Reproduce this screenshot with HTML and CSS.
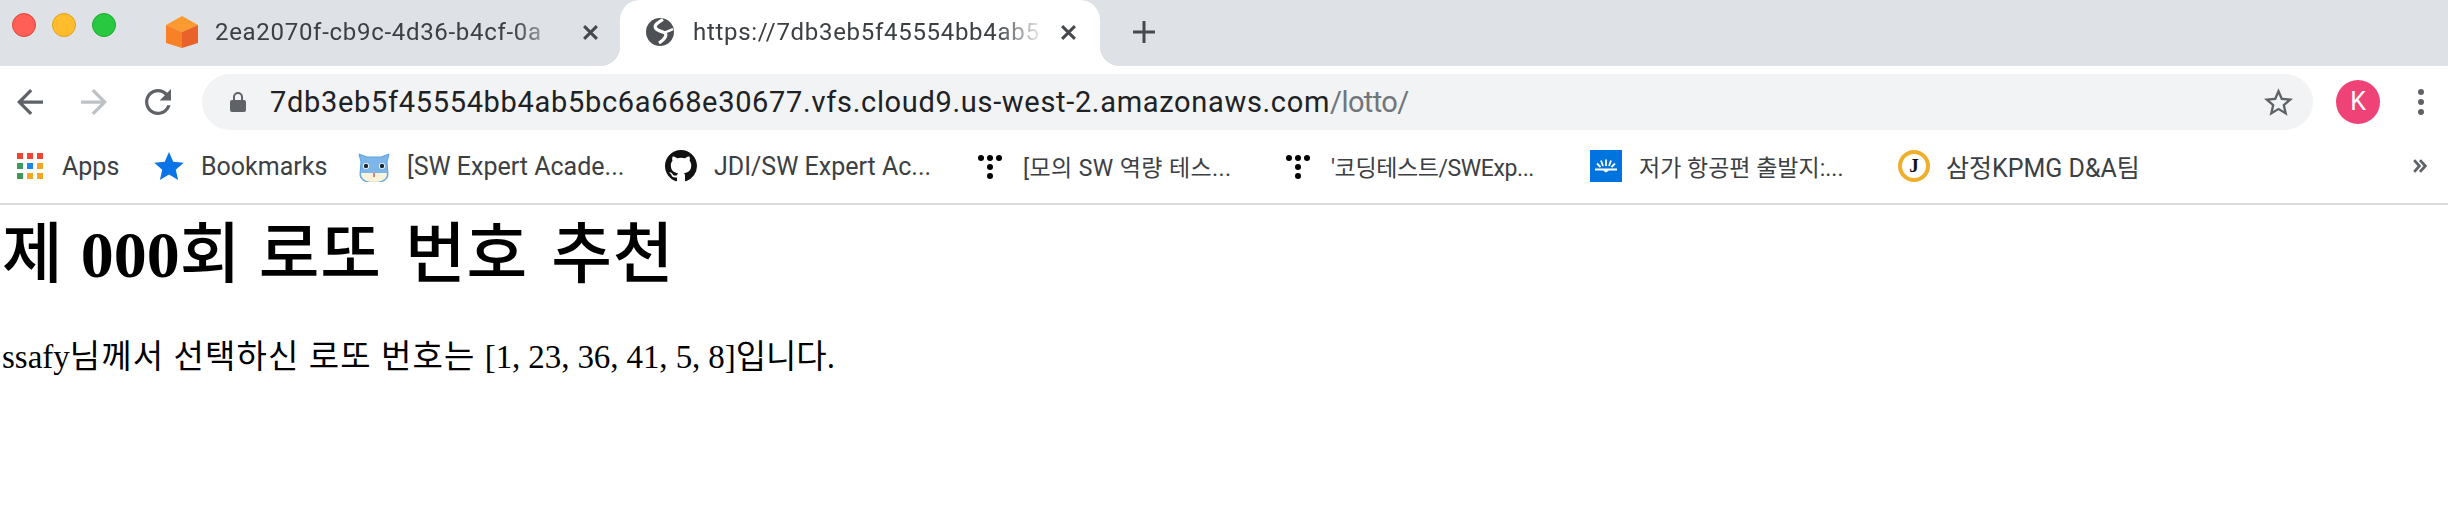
FILE: index.html
```html
<!DOCTYPE html>
<html lang="ko">
<head>
    <meta charset="UTF-8">
    <meta name="viewport" content="width=device-width, initial-scale=1.0">
    <title>로또 번호 추천</title>
    <link rel="stylesheet" href="styles.css">
</head>
<body>
    <header class="browser">
        <div class="tabstrip">
            <div class="lights">
                <span class="light red"></span>
                <span class="light yellow"></span>
                <span class="light green"></span>
            </div>
            <div class="tab">
                <svg class="favicon cube" viewBox="0 0 32 32">
                    <path fill="#fb9a2f" d="M16 0 32 9 16 16 0 9z"/>
                    <path fill="#f88127" d="M0 9 16 16V32L0 27z"/>
                    <path fill="#e8622a" d="M32 9 16 16V32L32 27z"/>
                </svg>
                <span class="tab-title">2ea2070f-cb9c-4d36-b4cf-0a</span>
                <svg class="tab-close" viewBox="0 0 16 16"><path d="M2 2 14 14M14 2 2 14"/></svg>
            </div>
            <div class="tab active">
                <svg class="favicon globe" viewBox="0 0 28 28">
                    <circle cx="14" cy="14" r="14" fill="#4d5156"/>
                    <path fill="none" stroke="#fff" stroke-width="3.200" d="M17 1.500C12 4.500 8 7 9.500 10 11 13 15 13 18 14.500 21.500 16 20 20.500 13 25"/>
                    <path fill="none" stroke="#fff" stroke-width="2.400" d="M18 14.500C21 13.500 24 13 27 11"/>
                </svg>
                <span class="tab-title">https://7db3eb5f45554bb4ab5</span>
                <svg class="tab-close" viewBox="0 0 16 16"><path d="M2 2 14 14M14 2 2 14"/></svg>
            </div>
            <svg class="new-tab" viewBox="0 0 24 24"><path d="M12 1V23M1 12H23"/></svg>
        </div>

        <div class="toolbar">
            <svg class="nav-icon" viewBox="4 4 16 16"><path d="M20 11H7.830l5.590-5.590L12 4l-8 8 8 8 1.410-1.410L7.830 13H20v-2z"/></svg>
            <svg class="nav-icon disabled" viewBox="4 4 16 16"><path d="M4 11h12.170l-5.590-5.590L12 4l8 8-8 8-1.410-1.410L16.170 13H4v-2z"/></svg>
            <svg class="nav-icon reload" viewBox="4 4 16 16"><path d="M17.650 6.350C16.200 4.900 14.210 4 12 4c-4.420 0-7.990 3.580-7.990 8s3.570 8 7.990 8c3.730 0 6.840-2.550 7.730-6h-2.080c-.820 2.330-3.040 4-5.650 4-3.310 0-6-2.690-6-6s2.690-6 6-6c1.660 0 3.140.690 4.220 1.780L13 11h7V4l-2.350 2.350z"/></svg>
            <div class="omnibox">
                <svg class="lock" viewBox="0 0 16 20">
                    <path d="M0 10a2 2 0 0 1 2-2h1V5a5 5 0 0 1 10 0v3h1a2 2 0 0 1 2 2v8a2 2 0 0 1-2 2H2a2 2 0 0 1-2-2zM5 8h6V5a3 3 0 0 0-6 0z"/>
                </svg>
                <span class="url">7db3eb5f45554bb4ab5bc6a668e30677.vfs.cloud9.us-west-2.amazonaws.com<span class="url-path">/lotto/</span></span>
                <svg class="bookmark-star" viewBox="2 2 20 19"><path d="M22 9.240l-7.190-.620L12 2 9.190 8.630 2 9.240l5.460 4.730L5.820 21 12 17.270 18.180 21l-1.630-7.030L22 9.240zM12 15.400l-3.760 2.270 1-4.280-3.320-2.880 4.380-.380L12 6.100l1.710 4.040 4.380.380-3.320 2.880 1 4.280L12 15.400z"/></svg>
            </div>
            <div class="avatar">K</div>
            <div class="menu"><span></span><span></span><span></span></div>
        </div>

        <div class="bookmarks">
            <a class="bm">
                <svg class="bm-icon" viewBox="0 0 26 26">
                    <rect x="0" y="0" width="6" height="6" fill="#f44336"/><rect x="10" y="0" width="6" height="6" fill="#f44336"/><rect x="20" y="0" width="6" height="6" fill="#f44336"/>
                    <rect x="0" y="10" width="6" height="6" fill="#3b9a5c"/><rect x="10" y="10" width="6" height="6" fill="#1a88e6"/><rect x="20" y="10" width="6" height="6" fill="#f5a623"/>
                    <rect x="0" y="20" width="6" height="6" fill="#3b9a5c"/><rect x="10" y="20" width="6" height="6" fill="#f5a623"/><rect x="20" y="20" width="6" height="6" fill="#f5a623"/>
                </svg>
                Apps
            </a>
            <a class="bm">
                <svg class="bm-icon star" viewBox="2 2 20 19"><path fill="#0a74e6" d="M12 2l2.900 6.600 7.100.7-5.400 4.700 1.600 7L12 17.300 5.800 21l1.600-7L2 9.300l7.100-.7z"/></svg>
                Bookmarks
            </a>
            <a class="bm">
                <svg class="bm-icon wide" viewBox="0 -3 32 32">
                    <path fill="#7db7ea" stroke="#5c9fdc" d="M1 1 9 4h14l8-3-2 8 1 12c0 6-5 8.500-14 8.500S2 27 2 21L3 9z"/>
                    <path fill="#fdf3d8" d="M3 20h26c0 6-5 9-13 9S3 26 3 20z"/>
                    <circle cx="8" cy="13" r="3" fill="#fff"/><circle cx="24" cy="13" r="3" fill="#fff"/>
                    <circle cx="8" cy="13" r="2.200" fill="#1d2733"/><circle cx="24" cy="13" r="2.200" fill="#1d2733"/>
                    <rect x="15.400" y="20" width="1.200" height="4" fill="#e0352b"/>
                </svg>
                [SW Expert Acade...
            </a>
            <a class="bm">
                <svg class="bm-icon wide" viewBox="0 0 16 16"><path fill="#111" d="M8 0C3.580 0 0 3.580 0 8c0 3.540 2.290 6.530 5.470 7.590.4.070.55-.17.55-.38 0-.19-.01-.82-.01-1.490-2.010.37-2.530-.49-2.690-.94-.09-.23-.48-.94-.82-1.130-.28-.15-.68-.52-.01-.53.630-.01 1.080.58 1.230.82.720 1.210 1.870.87 2.330.66.070-.52.280-.87.510-1.070-1.780-.2-3.640-.89-3.640-3.950 0-.87.310-1.590.820-2.150-.08-.2-.36-1.020.08-2.120 0 0 .67-.21 2.200.82.640-.18 1.320-.27 2-.27s1.360.09 2 .27c1.530-1.040 2.200-.82 2.200-.82.440 1.100.16 1.920.08 2.120.51.560.82 1.270.82 2.150 0 3.070-1.870 3.750-3.650 3.950.29.250.54.730.54 1.480 0 1.070-.01 1.930-.01 2.200 0 .21.150.46.550.38A8.010 8.010 0 0 0 16 8c0-4.420-3.580-8-8-8z"/></svg>
                JDI/SW Expert Ac...
            </a>
            <a class="bm ko-wide">
                <svg class="bm-icon" viewBox="0 0 26 26"><circle cx="3" cy="5" r="3"/><circle cx="12" cy="5" r="3"/><circle cx="21" cy="5" r="3"/><circle cx="12" cy="14" r="3"/><circle cx="12" cy="23" r="3"/></svg>
                [모의 SW 역량 테스...
            </a>
            <a class="bm ko-tight">
                <svg class="bm-icon" viewBox="0 0 26 26"><circle cx="3" cy="5" r="3"/><circle cx="12" cy="5" r="3"/><circle cx="21" cy="5" r="3"/><circle cx="12" cy="14" r="3"/><circle cx="12" cy="23" r="3"/></svg>
                '코딩테스트/SWExp...
            </a>
            <a class="bm ko">
                <svg class="bm-icon wide" viewBox="0 0 32 32">
                    <rect width="32" height="32" fill="#0074de"/>
                    <path stroke="#fff" stroke-width="1.800" fill="none" d="M16 9.500V16M11 10.500 13 16M21 10.500 19 16M7 13.500 10.500 17M25 13.500 21.500 17"/>
                    <path fill="#fff" d="M5 18.500H27V20.500H19L16 22.500 13 20.500H5z"/>
                </svg>
                저가 항공편 출발지:...
            </a>
            <a class="bm">
                <span class="kpmg-icon">J</span>
                삼정KPMG D&amp;A팀
            </a>
            <svg class="more" viewBox="0 0 12 12"><path d="M1 1 5.500 6 1 11M6 1 10.500 6 6 11"/></svg>
        </div>
    </header>

    <main class="page">
        <h1 class="title">제 <b>000</b>회 <span class="title-words">로또 번호 추천</span></h1>
        <p class="result">ssafy<span class="result-ko">님께서 선택하신 로또 번호는 </span><span class="result-nums">[1, 23, 36, 41, 5, 8]</span>입니다.</p>
    </main>
</body>
</html>
```

FILE: styles.css
```css
html, body {
    margin: 0;
    padding: 0;
    background-color: #fff;
}
body {
    height: 530px;
    overflow: hidden;
}

/* browser chrome */
.browser {
    font-family: Roboto, "Noto Sans CJK KR", sans-serif;
    color: #3c4043;
    border-bottom: 2px solid #dadce0;
}
.tabstrip {
    display: flex;
    align-items: center;
    height: 66px;
    background-color: #dee1e6;
}
.lights {
    display: flex;
    gap: 16px;
    width: 166px;
    padding-left: 12px;
    box-sizing: border-box;
    align-self: flex-start;
    margin-top: 13px;
}
.light {
    width: 24px;
    height: 24px;
    border-radius: 50%;
    box-sizing: border-box;
}
.red {
    background-color: #ff5f57;
    border: 1px solid #e2463f;
}
.yellow {
    background-color: #ffbd2e;
    border: 1px solid #e1a116;
}
.green {
    background-color: #28c840;
    border: 1px solid #1dad2b;
}
.tab {
    display: flex;
    align-items: center;
    width: 454px;
    height: 66px;
    padding-bottom: 2px;
    box-sizing: border-box;
    font-size: 24px;
}
.tab.active {
    position: relative;
    width: 480px;
    padding-left: 26px;
    background-color: #fff;
    border-radius: 20px 20px 0 0;
}
.tab.active::before,
.tab.active::after {
    content: "";
    position: absolute;
    bottom: 0;
    width: 20px;
    height: 20px;
}
.tab.active::before {
    left: -20px;
    background: radial-gradient(circle at 0 0, #dee1e6 20px, #fff 20.500px);
}
.tab.active::after {
    right: -20px;
    background: radial-gradient(circle at 100% 0, #dee1e6 20px, #fff 20.500px);
}
.favicon {
    flex: none;
}
.cube {
    width: 32px;
    height: 32px;
    margin-right: 17px;
}
.globe {
    width: 28px;
    height: 28px;
    margin-right: 19px;
}
.tab-title {
    width: 348px;
    white-space: nowrap;
    overflow: hidden;
    letter-spacing: 0.7px;
    -webkit-mask-image: linear-gradient(to right, #000 86%, transparent 100%);
    mask-image: linear-gradient(to right, #000 86%, transparent 100%);
}
.active .tab-title {
    width: 352px;
}
.tab-close {
    flex: none;
    width: 17px;
    height: 17px;
    margin-left: 19px;
    fill: none;
    stroke: #45484c;
    stroke-width: 2.800;
}
.active .tab-close {
    margin-left: 15px;
}
.new-tab {
    width: 24px;
    height: 24px;
    margin-left: 32px;
    margin-bottom: 2px;
    fill: none;
    stroke: #45484c;
    stroke-width: 3;
}

.toolbar {
    display: flex;
    align-items: center;
    height: 72px;
    background-color: #fff;
}
.nav-icon {
    flex: none;
    width: 26px;
    height: 26px;
    margin-left: 17px;
    margin-right: 21px;
    fill: #5f6368;
}
.nav-icon.disabled {
    fill: #bdc1c6;
}
.nav-icon.reload {
    margin-right: 31px;
}
.omnibox {
    flex: none;
    display: flex;
    align-items: center;
    width: 2111px;
    height: 56px;
    padding: 0 20px 0 28px;
    box-sizing: border-box;
    background-color: #f1f3f4;
    border-radius: 28px;
}
.lock {
    flex: none;
    width: 16px;
    height: 20px;
    fill: #5f6368;
}
.url {
    flex: 1;
    margin-left: 24px;
    font-size: 29px;
    letter-spacing: 0.68px;
    color: #202124;
    white-space: nowrap;
}
.url-path {
    color: #70757a;
    letter-spacing: -0.6px;
}
.bookmark-star {
    flex: none;
    width: 29px;
    height: 28px;
    fill: #5f6368;
}
.avatar {
    flex: none;
    width: 44px;
    height: 44px;
    margin-left: 23px;
    border-radius: 50%;
    background-color: #ef4377;
    color: #fff;
    font-size: 25px;
    line-height: 44px;
    text-align: center;
}
.menu {
    display: flex;
    flex-direction: column;
    gap: 4px;
    margin-left: 38px;
}
.menu span {
    width: 6px;
    height: 6px;
    border-radius: 50%;
    background-color: #5f6368;
}

.bookmarks {
    display: grid;
    grid-template-columns: 137px 204px 307px 313px 308px 304px 308px 1fr auto;
    align-items: center;
    height: 56px;
    padding: 0 21px 9px 17px;
    font-size: 25px;
    background-color: #fff;
}
.bm {
    display: flex;
    align-items: center;
    white-space: nowrap;
}
.ko {
    font-size: 23px;
}
.ko-wide {
    font-size: 23px;
    letter-spacing: 0.4px;
}
.ko-tight {
    font-size: 23px;
    letter-spacing: -0.4px;
}
.bm-icon {
    flex: none;
    width: 26px;
    height: 26px;
    margin-right: 19px;
}
.bm-icon.star {
    width: 30px;
    height: 28px;
    margin-right: 17px;
}
.bm-icon.wide {
    width: 32px;
    height: 32px;
    margin-right: 17px;
}
.kpmg-icon {
    flex: none;
    box-sizing: border-box;
    width: 32px;
    height: 32px;
    margin-right: 16px;
    border: 4px solid #efae2c;
    border-radius: 50%;
    color: #111;
    font-family: "Liberation Serif", serif;
    font-size: 19px;
    font-weight: bold;
    line-height: 24px;
    text-align: center;
}
.more {
    width: 14px;
    height: 14px;
    fill: none;
    stroke: #5f6368;
    stroke-width: 2.400;
}

/* page content */
.page {
    font-family: "Liberation Serif", "Noto Sans CJK KR", serif;
    color: #000;
    padding-left: 2px;
}
.title {
    margin: 12px 0 0;
    font-size: 66px;
    font-weight: 500;
    letter-spacing: 0.8px;
    line-height: 76px;
    white-space: nowrap;
}
.title b {
    font-weight: bold;
    letter-spacing: 0;
}
.title-words {
    word-spacing: 6px;
}
.result {
    margin: 45px 0 0;
    font-size: 33px;
    line-height: 38px;
    white-space: nowrap;
}
.result-ko {
    letter-spacing: 1.1px;
}
.result-nums {
    letter-spacing: -0.1px;
}
```
